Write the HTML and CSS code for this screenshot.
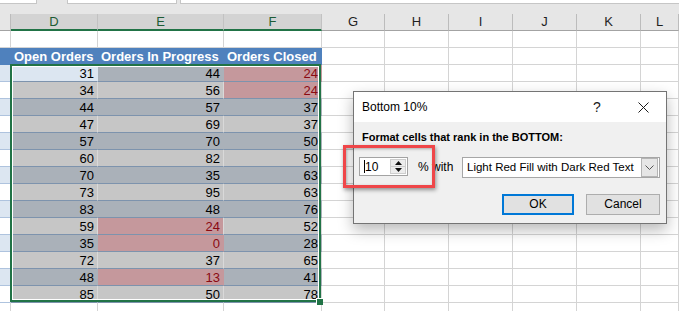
FILE: index.html
```html
<!DOCTYPE html>
<html>
<head>
<meta charset="utf-8">
<title>Bottom 10%</title>
<link rel="stylesheet" href="styles.css">
</head>
<body>
<div class="app">
  <div class="topbar">
    <div class="box box-name"></div>
    <div class="box box-mid"></div>
    <div class="box box-formula"></div>
  </div>

  <div class="sheet">
    <div class="row colhead">
      <div class="ch"></div>
      <div class="ch sel">D</div>
      <div class="ch sel">E</div>
      <div class="ch sel">F</div>
      <div class="ch">G</div>
      <div class="ch">H</div>
      <div class="ch">I</div>
      <div class="ch">J</div>
      <div class="ch">K</div>
      <div class="ch">L</div>
    </div>

    <div class="row">
      <div class="c"></div><div class="c"></div><div class="c"></div><div class="c"></div>
      <div class="c"></div><div class="c"></div><div class="c"></div><div class="c"></div><div class="c"></div><div class="c"></div>
    </div>

    <div class="row band">
      <div class="c th"></div>
      <div class="c th">Open Orders</div>
      <div class="c th">Orders In Progress</div>
      <div class="c th">Orders Closed</div>
      <div class="c"></div><div class="c"></div><div class="c"></div><div class="c"></div><div class="c"></div><div class="c"></div>
    </div>

    <div class="row data odd">
      <div class="c cs"></div><div class="c t n active">31</div><div class="c t n">44</div><div class="c t n bad">24</div>
      <div class="c"></div><div class="c"></div><div class="c"></div><div class="c"></div><div class="c"></div><div class="c"></div>
    </div>
    <div class="row data even">
      <div class="c cs"></div><div class="c t n">34</div><div class="c t n">56</div><div class="c t n bad">24</div>
      <div class="c"></div><div class="c"></div><div class="c"></div><div class="c"></div><div class="c"></div><div class="c"></div>
    </div>
    <div class="row data odd">
      <div class="c cs"></div><div class="c t n">44</div><div class="c t n">57</div><div class="c t n">37</div>
      <div class="c"></div><div class="c"></div><div class="c"></div><div class="c"></div><div class="c"></div><div class="c"></div>
    </div>
    <div class="row data even">
      <div class="c cs"></div><div class="c t n">47</div><div class="c t n">69</div><div class="c t n">37</div>
      <div class="c"></div><div class="c"></div><div class="c"></div><div class="c"></div><div class="c"></div><div class="c"></div>
    </div>
    <div class="row data odd">
      <div class="c cs"></div><div class="c t n">57</div><div class="c t n">70</div><div class="c t n">50</div>
      <div class="c"></div><div class="c"></div><div class="c"></div><div class="c"></div><div class="c"></div><div class="c"></div>
    </div>
    <div class="row data even">
      <div class="c cs"></div><div class="c t n">60</div><div class="c t n">82</div><div class="c t n">50</div>
      <div class="c"></div><div class="c"></div><div class="c"></div><div class="c"></div><div class="c"></div><div class="c"></div>
    </div>
    <div class="row data odd">
      <div class="c cs"></div><div class="c t n">70</div><div class="c t n">35</div><div class="c t n">63</div>
      <div class="c"></div><div class="c"></div><div class="c"></div><div class="c"></div><div class="c"></div><div class="c"></div>
    </div>
    <div class="row data even">
      <div class="c cs"></div><div class="c t n">73</div><div class="c t n">95</div><div class="c t n">63</div>
      <div class="c"></div><div class="c"></div><div class="c"></div><div class="c"></div><div class="c"></div><div class="c"></div>
    </div>
    <div class="row data odd">
      <div class="c cs"></div><div class="c t n">83</div><div class="c t n">48</div><div class="c t n">76</div>
      <div class="c"></div><div class="c"></div><div class="c"></div><div class="c"></div><div class="c"></div><div class="c"></div>
    </div>
    <div class="row data even">
      <div class="c cs"></div><div class="c t n">59</div><div class="c t n bad">24</div><div class="c t n">52</div>
      <div class="c"></div><div class="c"></div><div class="c"></div><div class="c"></div><div class="c"></div><div class="c"></div>
    </div>
    <div class="row data odd">
      <div class="c cs"></div><div class="c t n">35</div><div class="c t n bad">0</div><div class="c t n">28</div>
      <div class="c"></div><div class="c"></div><div class="c"></div><div class="c"></div><div class="c"></div><div class="c"></div>
    </div>
    <div class="row data even">
      <div class="c cs"></div><div class="c t n">72</div><div class="c t n">37</div><div class="c t n">65</div>
      <div class="c"></div><div class="c"></div><div class="c"></div><div class="c"></div><div class="c"></div><div class="c"></div>
    </div>
    <div class="row data odd">
      <div class="c cs"></div><div class="c t n">48</div><div class="c t n bad">13</div><div class="c t n">41</div>
      <div class="c"></div><div class="c"></div><div class="c"></div><div class="c"></div><div class="c"></div><div class="c"></div>
    </div>
    <div class="row data even">
      <div class="c cs"></div><div class="c t n">85</div><div class="c t n">50</div><div class="c t n">78</div>
      <div class="c"></div><div class="c"></div><div class="c"></div><div class="c"></div><div class="c"></div><div class="c"></div>
    </div>

    <div class="row">
      <div class="c"></div><div class="c"></div><div class="c"></div><div class="c"></div>
      <div class="c"></div><div class="c"></div><div class="c"></div><div class="c"></div><div class="c"></div><div class="c"></div>
    </div>

    <div class="selection"><span class="handle"></span></div>
  </div>

  <div class="dialog">
    <div class="titlebar">
      <span class="title">Bottom 10%</span>
      <span class="cap help">?</span>
      <span class="cap close">
        <svg width="11" height="11" viewBox="0 0 11 11"><path d="M0.5 0.5 L10.5 10.5 M10.5 0.5 L0.5 10.5" stroke="#1a1a1a" stroke-width="1" fill="none"/></svg>
      </span>
    </div>
    <div class="dbody">
      <div class="label">Format cells that rank in the BOTTOM:</div>
      <div class="controls">
        <div class="spinner">
          <div class="spin-text"><span class="caret"></span>10</div>
          <div class="spin-btns">
            <span class="spin-btn"><svg width="7" height="4" viewBox="0 0 7 4"><path d="M0 4 L3.5 0 L7 4 Z" fill="#111"/></svg></span>
            <span class="spin-btn"><svg width="7" height="4" viewBox="0 0 7 4"><path d="M0 0 L3.5 4 L7 0 Z" fill="#111"/></svg></span>
          </div>
        </div>
        <span class="pct">% with</span>
        <div class="combo">
          <span class="combo-text">Light Red Fill with Dark Red Text</span>
          <span class="combo-btn"><svg width="9" height="5" viewBox="0 0 9 5"><path d="M0.5 0.5 L4.5 4.5 L8.5 0.5" stroke="#555" stroke-width="1" fill="none"/></svg></span>
        </div>
      </div>
      <div class="buttons">
        <div class="btn ok">OK</div>
        <div class="btn">Cancel</div>
      </div>
    </div>
  </div>

  <div class="annot"></div>
</div>
</body>
</html>
```

FILE: styles.css
```css
html, body {
  margin: 0;
  padding: 0;
  background: #ffffff;
  overflow: hidden;
}

.app {
  position: relative;
  width: 679px;
  height: 311px;
  overflow: hidden;
  font-family: "Liberation Sans", Arial, sans-serif;
}

/* formula-bar remnants */
.topbar {
  height: 14px;
  background: #e6e6e6;
  display: flex;
  align-items: flex-start;
}
.box {
  box-sizing: border-box;
  height: 4px;
  background: #ffffff;
  border: 1px solid #c6c6c6;
  border-top: none;
}
.box-name { width: 37px; border-left: none; }
.box-mid { width: 110px; margin-left: 30px; }
.box-formula { flex: 1; margin-left: 3px; border-right: none; }

/* sheet grid */
.sheet {
  position: relative;
}
.row {
  display: grid;
  grid-template-columns: 11px 87px 126px 98px 63px 64px 64px 64px 64px 1fr;
  grid-template-rows: 17px;
  height: 17px;
}

.ch {
  box-sizing: border-box;
  background: #e6e6e6;
  border-right: 1px solid #bcbcbc;
  border-bottom: 1px solid #a3a3a3;
  font-size: 13px;
  line-height: 16px;
  text-align: center;
  color: #1f1f1f;
}
.ch.sel {
  background: #d3d3d3;
  color: #1d5c36;
  border-right-color: #c2c2c2;
  border-bottom: 2px solid #217346;
  line-height: 15px;
}

.c {
  box-sizing: border-box;
  border-right: 1px solid #d4d4d4;
  border-bottom: 1px solid #d4d4d4;
  font-size: 13px;
  line-height: 16px;
  padding: 1px 3px 0 3px;
  white-space: nowrap;
  color: #000000;
}

.band .th {
  background: #4f81bd;
  color: #ffffff;
  font-weight: bold;
  border-right-color: #4f81bd;
  border-bottom-color: #4f81bd;
  padding-left: 3px;
}

.n { text-align: right; }

.data .cs { border-bottom-color: #aec3de; }
.data.odd .cs { background: #dce6f1; }
.data.even .cs { background: #ffffff; }

.data .t { border-bottom-color: #7d93ad; }
.data.odd .t { background: #aab1b9; border-right-color: #aab1b9; }
.data.even .t { background: #c6c6c6; border-right-color: #d9d9d9; }
.data .t.active { background: #dce6f1; border-right-color: #dce6f1; }
.data .t.bad { background: #c5989c; color: #8a0a12; }
.data.odd .t.bad { border-right-color: #c5989c; }

/* selection marquee over D2:F15 */
.selection {
  position: absolute;
  left: 10px;
  top: 50px;
  width: 311px;
  height: 238px;
  box-sizing: border-box;
  border: 2px solid #217346;
  box-shadow: inset 0 0 0 1px #ffffff;
  pointer-events: none;
}
.handle {
  position: absolute;
  right: -4px;
  bottom: -5px;
  width: 6px;
  height: 6px;
  background: #217346;
  box-shadow: -1px -1px 0 #ffffff;
}

/* dialog */
.dialog {
  position: absolute;
  left: 353px;
  top: 91px;
  width: 314px;
  height: 133px;
  box-sizing: border-box;
  border: 1px solid #747474;
  background: #f0f0f0;
  box-shadow: 0 6px 14px rgba(0, 0, 0, 0.28);
  display: flex;
  flex-direction: column;
}
.titlebar {
  height: 30px;
  background: #ffffff;
  display: flex;
  align-items: center;
}
.title {
  flex: 1;
  padding-left: 8px;
  font-size: 12px;
  color: #000000;
}
.cap {
  width: 46px;
  height: 30px;
  display: flex;
  align-items: center;
  justify-content: center;
  font-size: 14px;
  color: #1a1a1a;
}
.dbody {
  flex: 1;
  padding: 7px 6px 0 5px;
  display: flex;
  flex-direction: column;
}
.label {
  padding-left: 3px;
  font-size: 11px;
  font-weight: bold;
  line-height: 16px;
  color: #000000;
}
.controls {
  margin-top: 12px;
  height: 21px;
  display: flex;
  align-items: flex-start;
}
.spinner {
  box-sizing: border-box;
  width: 49px;
  height: 19px;
  border: 1px solid #a3a3a3;
  background: #ffffff;
  display: flex;
}
.spin-text {
  flex: 1;
  display: flex;
  align-items: center;
  padding-left: 4px;
  font-size: 12px;
  color: #000000;
}
.caret {
  width: 1px;
  height: 13px;
  background: #000000;
  margin-right: 0;
}
.spin-btns {
  width: 16px;
  margin: 1px 1px 1px 0;
  display: flex;
  flex-direction: column;
}
.spin-btn {
  flex: 1;
  box-sizing: border-box;
  background: #ececec;
  border: 1px solid #cdcdcd;
  display: flex;
  align-items: center;
  justify-content: center;
}
.spin-btn + .spin-btn { border-top: none; }
.pct {
  margin-left: 10px;
  font-size: 12px;
  line-height: 21px;
  color: #000000;
}
.combo {
  margin-left: auto;
  box-sizing: border-box;
  width: 198px;
  height: 21px;
  border: 1px solid #a6a6a6;
  background: #ffffff;
  display: flex;
  align-items: stretch;
}
.combo-text {
  flex: 1;
  padding-left: 4px;
  font-size: 11.5px;
  line-height: 19px;
  color: #000000;
  white-space: nowrap;
}
.combo-btn {
  width: 17px;
  margin: 0 1px 0 0;
  box-sizing: border-box;
  background: #e6e6e6;
  border: 1px solid #b4b4b4;
  display: flex;
  align-items: center;
  justify-content: center;
}
.buttons {
  margin-top: 16px;
  display: flex;
  justify-content: flex-end;
  gap: 12px;
}
.btn {
  box-sizing: border-box;
  width: 74px;
  height: 21px;
  background: #e1e1e1;
  border: 1px solid #adadad;
  font-size: 12px;
  line-height: 19px;
  text-align: center;
  color: #000000;
}
.btn.ok {
  width: 72px;
  border: 2px solid #0078d7;
  line-height: 17px;
}

/* red annotation rectangle */
.annot {
  position: absolute;
  left: 343px;
  top: 145px;
  width: 92px;
  height: 43px;
  box-sizing: border-box;
  border: 3px solid #ef4649;
  box-shadow: 1px 2px 4px rgba(0, 0, 0, 0.4), inset 1px 1px 3px rgba(0, 0, 0, 0.3);
  pointer-events: none;
}
```
